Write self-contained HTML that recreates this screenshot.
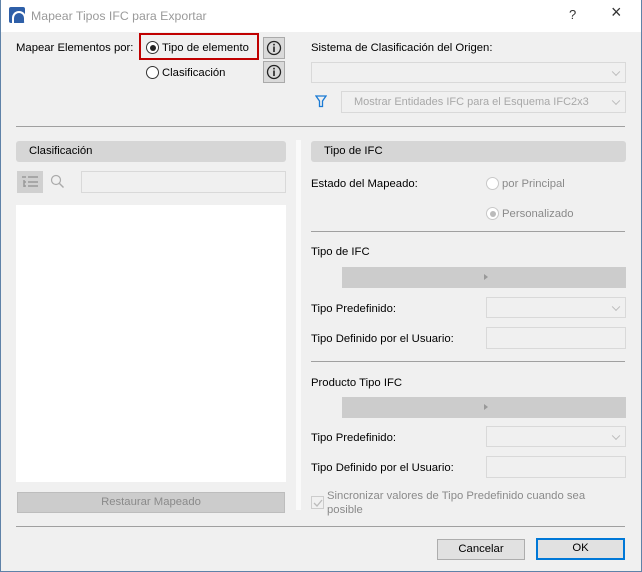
<!DOCTYPE html>
<html><head><meta charset="utf-8"><style>
*{margin:0;padding:0;box-sizing:border-box}
body{width:642px;height:572px;overflow:hidden;background:#f0f0f0;font-family:"Liberation Sans",sans-serif;font-size:11.3px;color:#000;position:relative}
.a{position:absolute}
.t{position:absolute;line-height:14px;white-space:nowrap}
.dd{position:absolute;background:#f0f0f0;border:1px solid #d9d9d9}
.dd:after{content:"";position:absolute;right:6px;top:50%;width:5px;height:5px;border-right:1px solid #bbb;border-bottom:1px solid #bbb;transform:translateY(-70%) rotate(45deg)}
.inp{position:absolute;background:#f0f0f0;border:1px solid #d9d9d9}
.hdr{position:absolute;background:#d6d6d6;border-radius:3px;height:21px;line-height:21px;padding-left:13px}
.sep{position:absolute;height:1px;background:#a0a0a0}
.bar{position:absolute;background:#cccccc;height:21px}
.bar:after{content:"";position:absolute;left:50%;top:7px;border-left:4px solid #999;border-top:3.5px solid transparent;border-bottom:3.5px solid transparent}
.rad{position:absolute;width:13px;height:13px;border-radius:50%;border:1px solid #333;background:#fff}
.info{position:absolute;width:22px;height:22px;background:#dadada;border:1px solid #aaa}
</style></head><body>
<div class="a" style="left:0;top:0;width:642px;height:32px;background:#fff"></div>
<div class="a" style="left:0;top:0;width:1px;height:572px;background:#5f82a8"></div>
<div class="a" style="right:0;top:0;width:1px;height:572px;background:#5f82a8"></div>
<div class="a" style="left:0;bottom:0;width:642px;height:1px;background:#5f82a8"></div>
<div class="a" style="left:9px;top:7px;width:16px;height:16px;background:#2e5fa8;border-radius:2px;overflow:hidden"><div class="a" style="left:3px;top:4px;width:14px;height:14px;border:2px solid #fff;border-radius:50% 50% 0 0;border-bottom:none"></div></div>
<div class="t" style="left:31px;top:9px;color:#9a9a9a;font-size:12.3px">Mapear Tipos IFC para Exportar</div>
<div class="t" style="left:569px;top:8px;font-size:13px;color:#333">?</div>
<div class="t" style="left:611px;top:5px;font-size:18px;color:#333">×</div>

<div class="t" style="left:16px;top:41px">Mapear Elementos por:</div>
<div class="a" style="left:139px;top:33px;width:120px;height:27px;border:2px solid #c00000"></div>
<div class="rad" style="left:146px;top:41px"><div class="a" style="left:2.5px;top:2.5px;width:6px;height:6px;border-radius:50%;background:#222"></div></div>
<div class="t" style="left:162px;top:41px">Tipo de elemento</div>
<div class="rad" style="left:146px;top:66px"></div>
<div class="t" style="left:162px;top:66px">Clasificación</div>
<div class="info" style="left:263px;top:37px"><svg class="a" style="left:2px;top:2px" width="16" height="16"><circle cx="8" cy="8" r="6.5" fill="none" stroke="#222" stroke-width="1.3"/><rect x="7.2" y="3.8" width="1.6" height="1.6" fill="#222"/><rect x="7.2" y="6.5" width="1.6" height="5.5" fill="#222"/></svg></div>
<div class="info" style="left:263px;top:61px"><svg class="a" style="left:2px;top:2px" width="16" height="16"><circle cx="8" cy="8" r="6.5" fill="none" stroke="#222" stroke-width="1.3"/><rect x="7.2" y="3.8" width="1.6" height="1.6" fill="#222"/><rect x="7.2" y="6.5" width="1.6" height="5.5" fill="#222"/></svg></div>

<div class="t" style="left:311px;top:41px">Sistema de Clasificación del Origen:</div>
<div class="dd" style="left:311px;top:62px;width:315px;height:21px"></div>
<svg class="a" style="left:315px;top:95px" width="12" height="13"><path d="M1 1H11L7.5 6V11.5H4.5V6Z" fill="none" stroke="#1a7ad4" stroke-width="1.3"/></svg>
<div class="dd" style="left:341px;top:91px;width:285px;height:22px"></div>
<div class="t" style="left:354px;top:95px;color:#a8a8a8;font-size:11px">Mostrar Entidades IFC para el Esquema IFC2x3</div>
<div class="sep" style="left:16px;top:126px;width:609px"></div>

<div class="hdr" style="left:16px;top:141px;width:270px">Clasificación</div>
<div class="a" style="left:17px;top:171px;width:26px;height:22px;background:#d0d0d0"></div>
<svg class="a" style="left:21px;top:175px" width="18" height="14"><g stroke="#999" stroke-width="1.5"><path d="M1 2H5M7 2H17M3 5V12M3 7H5M7 7H17M3 11H5M7 11H17"/></g></svg>
<svg class="a" style="left:50px;top:174px" width="15" height="15"><circle cx="6" cy="6" r="4.5" fill="none" stroke="#aaa" stroke-width="1.2"/><path d="M9.5 9.5L13.5 13.5" stroke="#aaa" stroke-width="1.4"/></svg>
<div class="inp" style="left:81px;top:171px;width:205px;height:22px"></div>
<div class="a" style="left:16px;top:205px;width:270px;height:277px;background:#fff"></div>
<div class="a" style="left:17px;top:492px;width:268px;height:21px;background:#cccccc;border:1px solid #bdbdbd;text-align:center;line-height:19px;color:#8a8a8a">Restaurar Mapeado</div>
<div class="a" style="left:296px;top:140px;width:5px;height:370px;background:#fafafa"></div>

<div class="hdr" style="left:311px;top:141px;width:315px">Tipo de IFC</div>
<div class="t" style="left:311px;top:177px">Estado del Mapeado:</div>
<div class="rad" style="left:486px;top:177px;border-color:#c8c8c8"></div>
<div class="t" style="left:502px;top:177px;color:#8a8a8a">por Principal</div>
<div class="rad" style="left:486px;top:207px;border-color:#c8c8c8"><div class="a" style="left:2.5px;top:2.5px;width:6px;height:6px;border-radius:50%;background:#bbb"></div></div>
<div class="t" style="left:502px;top:207px;color:#8a8a8a">Personalizado</div>
<div class="sep" style="left:311px;top:231px;width:314px"></div>

<div class="t" style="left:311px;top:245px">Tipo de IFC</div>
<div class="bar" style="left:342px;top:267px;width:284px"></div>
<div class="t" style="left:311px;top:302px">Tipo Predefinido:</div>
<div class="dd" style="left:486px;top:297px;width:140px;height:21px"></div>
<div class="t" style="left:311px;top:332px">Tipo Definido por el Usuario:</div>
<div class="inp" style="left:486px;top:327px;width:140px;height:22px"></div>
<div class="sep" style="left:311px;top:361px;width:314px"></div>

<div class="t" style="left:311px;top:376px">Producto Tipo IFC</div>
<div class="bar" style="left:342px;top:397px;width:284px"></div>
<div class="t" style="left:311px;top:431px">Tipo Predefinido:</div>
<div class="dd" style="left:486px;top:426px;width:140px;height:21px"></div>
<div class="t" style="left:311px;top:461px">Tipo Definido por el Usuario:</div>
<div class="inp" style="left:486px;top:456px;width:140px;height:22px"></div>
<div class="a" style="left:311px;top:496px;width:13px;height:13px;border:1px solid #ccc;background:#f0f0f0"></div>
<svg class="a" style="left:312px;top:497px" width="12" height="12"><path d="M2 6L5 9L10 3" fill="none" stroke="#bbb" stroke-width="1.3"/></svg>
<div class="t" style="left:327px;top:489px;color:#8a8a8a">Sincronizar valores de Tipo Predefinido cuando sea</div>
<div class="t" style="left:327px;top:503px;color:#8a8a8a">posible</div>

<div class="sep" style="left:16px;top:526px;width:609px"></div>
<div class="a" style="left:437px;top:539px;width:88px;height:21px;background:#e1e1e1;border:1px solid #adadad;text-align:center;line-height:19px">Cancelar</div>
<div class="a" style="left:536px;top:538px;width:89px;height:22px;background:#e1e1e1;border:2px solid #0078d7;text-align:center;line-height:17px">OK</div>
</body></html>
